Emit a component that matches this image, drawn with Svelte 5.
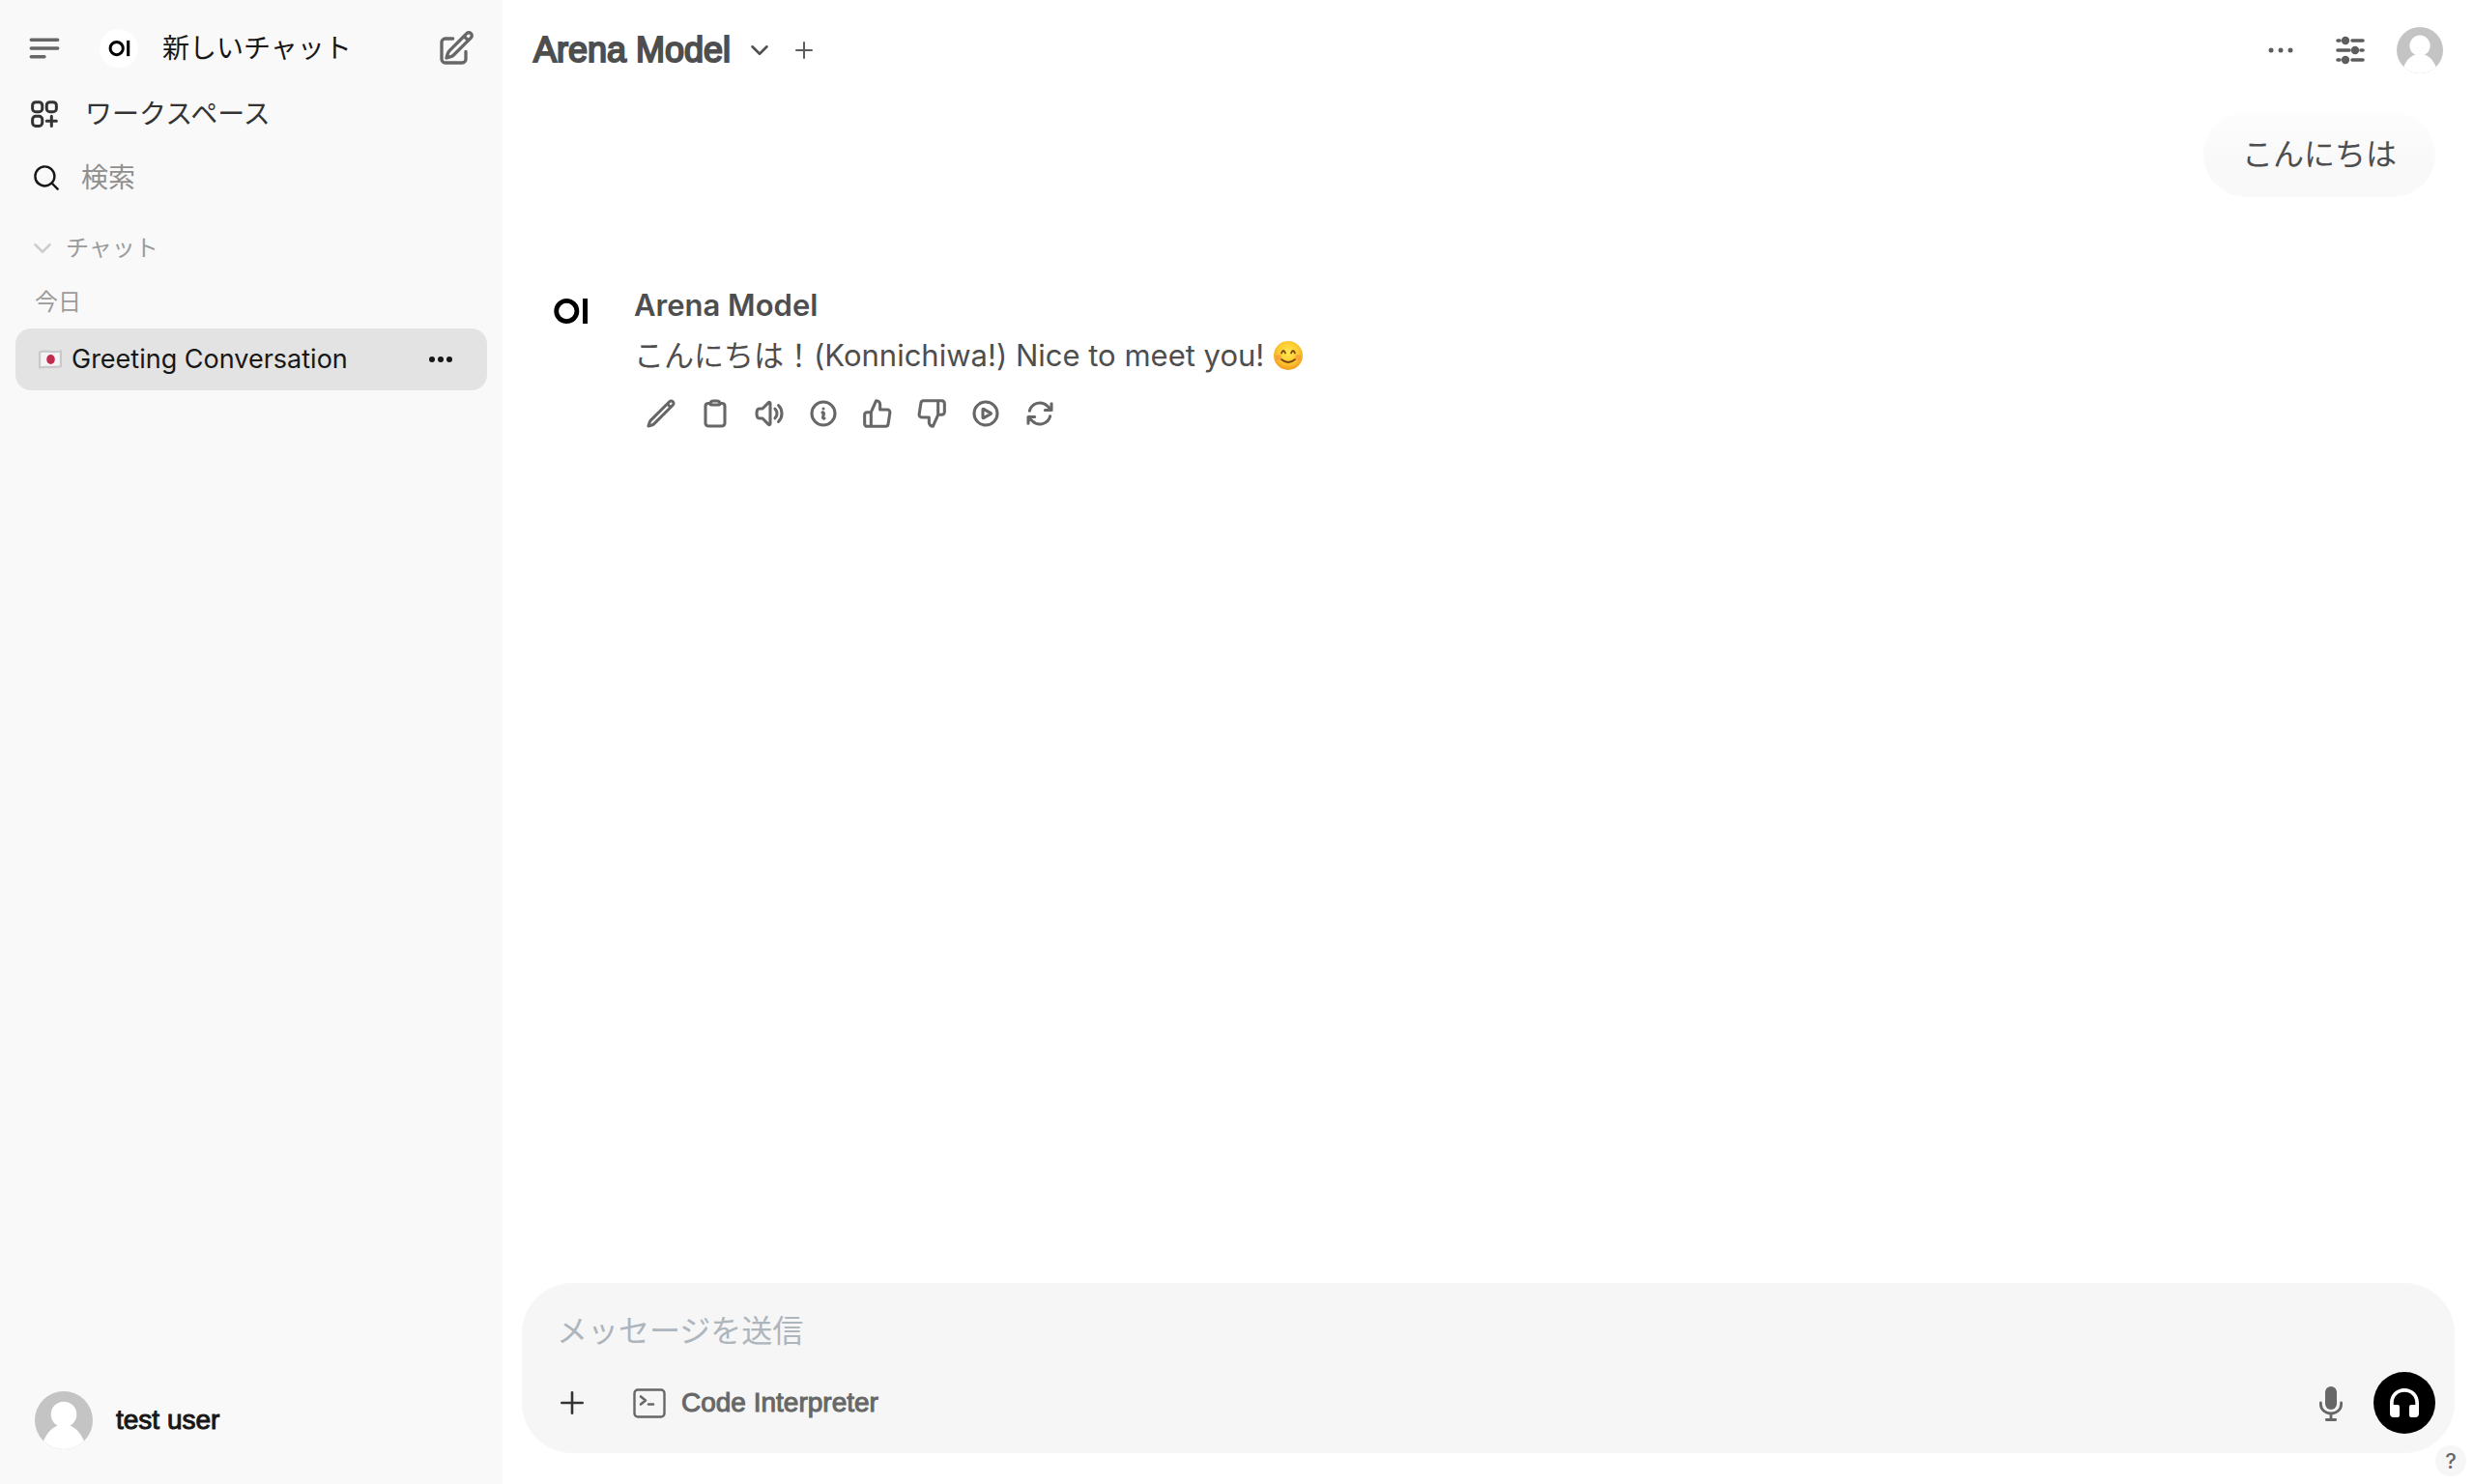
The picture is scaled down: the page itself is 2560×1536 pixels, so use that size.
<script>
  let search = $state("");
  let message = $state("");

  const ACTIONS = [
    {
      label: "編集",
      d: "M16.862 4.487l1.687-1.688a1.875 1.875 0 112.652 2.652L6.832 19.82a4.5 4.5 0 01-1.897 1.13l-2.685.8.8-2.685a4.5 4.5 0 011.13-1.897L16.863 4.487zm0 0L19.5 7.125"
    },
    {
      label: "コピー",
      d: "M15.666 3.888A2.25 2.25 0 0013.5 2.25h-3c-1.03 0-1.9.693-2.166 1.638m7.332 0c.055.194.084.4.084.612v0a.75.75 0 01-.75.75H9a.75.75 0 01-.75-.75v0c0-.212.03-.418.084-.612m7.332 0c.646.049 1.288.11 1.927.184 1.1.128 1.907 1.077 1.907 2.185V19.5a2.25 2.25 0 01-2.25 2.25H6.75A2.25 2.25 0 014.5 19.5V6.257c0-1.108.806-2.057 1.907-2.185a48.208 48.208 0 011.927-.184"
    },
    {
      label: "読み上げ",
      d: "M19.114 5.636a9 9 0 010 12.728M16.463 8.288a5.25 5.25 0 010 7.424M6.75 8.25l4.72-4.72a.75.75 0 011.28.53v15.88a.75.75 0 01-1.28.53l-4.72-4.72H4.51c-.88 0-1.704-.507-1.938-1.354A9.01 9.01 0 012.25 12c0-.83.112-1.633.322-2.396C2.806 8.756 3.63 8.25 4.51 8.25H6.75z"
    },
    {
      label: "情報",
      d: "M11.25 11.25l.041-.02a.75.75 0 011.063.852l-.708 2.836a.75.75 0 001.063.853l.041-.021M21 12a9 9 0 11-18 0 9 9 0 0118 0zm-9-3.75h.008v.008H12V8.25z"
    },
    {
      label: "良い応答",
      d: "M14 9V5a3 3 0 0 0-3-3l-4 9v11h11.28a2 2 0 0 0 2-1.7l1.38-9a2 2 0 0 0-2-2.3zM7 22H4a2 2 0 0 1-2-2v-7a2 2 0 0 1 2-2h3"
    },
    {
      label: "悪い応答",
      d: "M10 15v4a3 3 0 0 0 3 3l4-9V2H5.72a2 2 0 0 0-2 1.7l-1.38 9a2 2 0 0 0 2 2.3zm7-13h2.67A2.31 2.31 0 0 1 22 4v7a2.31 2.31 0 0 1-2.33 2H17"
    },
    {
      label: "続ける",
      d: "M21 12a9 9 0 1 1-18 0 9 9 0 0 1 18 0ZM15.91 11.672a.375.375 0 0 1 0 .656l-5.603 3.113a.375.375 0 0 1-.557-.328V8.887c0-.286.307-.466.557-.327l5.603 3.112Z"
    },
    {
      label: "再生成",
      d: "M16.023 9.348h4.992v-.001M2.985 19.644v-4.992m0 0h4.992m-4.993 0l3.181 3.183a8.25 8.25 0 0013.803-3.7M4.031 9.865a8.25 8.25 0 0113.803-3.7l3.181 3.182m0-4.991v4.99"
    }
  ];
</script>

{#snippet logo()}
  <svg class="logo" viewBox="0 0 64 64" aria-hidden="true">
    <circle cx="32" cy="32" r="32" fill="#fff" />
    <circle cx="28.3" cy="32" r="10.6" fill="none" stroke="#000" stroke-width="4.8" />
    <rect x="45" y="19" width="5" height="26" fill="#000" />
  </svg>
{/snippet}

{#snippet avatar()}
  <svg class="avatar" viewBox="0 0 60 60" aria-hidden="true">
    <clipPath id="avatar-clip"><circle cx="30" cy="30" r="30" /></clipPath>
    <g clip-path="url(#avatar-clip)">
      <rect width="60" height="60" fill="#c4c4c4" />
      <circle cx="30" cy="24" r="13.3" fill="#fff" />
      <path d="M9 51.5C13 42 19 36.500 25 35.500h10C41 36.500 47 42 51 51.500H60V60H0V51.500z" fill="#fff" />
    </g>
  </svg>
{/snippet}

<div class="app">
  <nav class="sidebar">
    <div class="row top">
      <button class="icon-btn" aria-label="サイドバー">
        <svg class="i40" viewBox="0 0 24 24"><path d="M3.750 6.750h16.500M3.750 12h16.500m-16.500 5.250H12" stroke-width="2" /></svg>
      </button>
      <a class="new-chat" href="#new">
        {@render logo()}
        <span>新しいチャット</span>
        <svg class="i40 edit" viewBox="0 0 24 24"><path stroke-width="2" d="m16.862 4.487 1.687-1.688a1.875 1.875 0 1 1 2.652 2.652L10.582 16.07a4.5 4.5 0 0 1-1.897 1.13L6 18l.8-2.685a4.5 4.5 0 0 1 1.13-1.897l8.932-8.931Zm0 0L19.5 7.125M18 14v4.75A2.25 2.25 0 0 1 15.75 21H5.25A2.25 2.25 0 0 1 3 18.75V8.25A2.25 2.25 0 0 1 5.25 6H10" /></svg>
      </a>
    </div>

    <a class="row workspace" href="#workspace">
      <svg class="i36" viewBox="0 0 24 24"><path stroke-width="2" d="M13.5 16.875h3.375m0 0h3.375m-3.375 0V13.5m0 3.375v3.375M6 10.5h2.25a2.25 2.25 0 0 0 2.25-2.25V6a2.25 2.25 0 0 0-2.25-2.25H6A2.25 2.25 0 0 0 3.75 6v2.25A2.25 2.25 0 0 0 6 10.5Zm0 9.75h2.25A2.25 2.25 0 0 0 10.5 18v-2.25a2.25 2.25 0 0 0-2.25-2.25H6a2.25 2.25 0 0 0-2.25 2.25V18A2.25 2.25 0 0 0 6 20.25Zm9.75-9.75H18a2.25 2.25 0 0 0 2.25-2.25V6A2.25 2.25 0 0 0 18 3.75h-2.25A2.25 2.25 0 0 0 13.5 6v2.25a2.25 2.25 0 0 0 2.25 2.25Z" /></svg>
      <span>ワークスペース</span>
    </a>

    <label class="row search">
      <svg class="i32 solid" viewBox="0 0 20 20"><path d="M9 3.5a5.5 5.5 0 1 0 0 11 5.5 5.5 0 0 0 0-11ZM2 9a7 7 0 1 1 12.452 4.391l3.328 3.329a.75.75 0 1 1-1.06 1.06l-3.329-3.328A7 7 0 0 1 2 9Z" /></svg>
      <input type="text" placeholder="検索" aria-label="検索" bind:value={search} />
    </label>

    <button class="section">
      <svg class="i24" viewBox="0 0 24 24"><path d="m19.5 8.25-7.5 7.5-7.5-7.5" stroke-width="2.5" /></svg>
      <span>チャット</span>
    </button>
    <div class="day">今日</div>

    <div class="chat-item">
      <a href="#chat">
        <svg class="flag" viewBox="0 0 24 20" aria-hidden="true">
          <path d="M1 2.500C7 0 14 3.500 23 1.500V17C15 19.500 8 16.500 1 18.500z" fill="#f4f4f5" stroke="#c9c9cd" />
          <ellipse cx="12.500" cy="10" rx="4.300" ry="4.900" fill="#c22a4e" />
        </svg>
        <span>Greeting Conversation</span>
      </a>
      <button class="icon-btn" aria-label="メニュー">
        <svg class="i24 solid" viewBox="0 0 24 24"><circle cx="3" cy="12" r="3" /><circle cx="12" cy="12" r="3" /><circle cx="21" cy="12" r="3" /></svg>
      </button>
    </div>

    <button class="user">
      {@render avatar()}
      <span>test user</span>
    </button>
  </nav>

  <main>
    <header>
      <button class="model">
        <span>Arena Model</span>
        <svg class="i24" viewBox="0 0 24 24"><path d="m19.5 8.25-7.5 7.5-7.5-7.5" stroke-width="2.5" /></svg>
      </button>
      <button class="icon-btn" aria-label="モデルを追加">
        <svg class="i24" viewBox="0 0 24 24"><path d="M12 4v16M4 12h16" stroke-width="2" /></svg>
      </button>
      <div class="tools">
        <button class="icon-btn" aria-label="その他">
          <svg class="i40 solid" viewBox="0 0 40 40"><circle cx="10" cy="20" r="2.500" /><circle cx="20" cy="20" r="2.500" /><circle cx="30" cy="20" r="2.500" /></svg>
        </button>
        <button class="icon-btn" aria-label="コントロール">
          <svg class="i40" viewBox="0 0 40 40">
            <path d="M7 10h2M22 10h11M7 20h12M31 20h2M7 30h2M22 30h11" stroke-width="3.600" />
            <g class="knobs"><circle cx="15" cy="10" r="4.200" /><circle cx="25" cy="20" r="4.200" /><circle cx="15" cy="30" r="4.200" /></g>
          </svg>
        </button>
        <button class="icon-btn account" aria-label="アカウント">{@render avatar()}</button>
      </div>
    </header>

    <section class="chat">
      <div class="bubble">こんにちは</div>

      <article>
        {@render logo()}
        <div class="answer">
          <h2>Arena Model</h2>
          <p>
            <span>こんにちは！(Konnichiwa!) Nice to meet you!</span>
            <svg class="smile" viewBox="0 0 32 32" role="img" aria-label="笑顔">
              <defs>
                <radialGradient id="face" cx="0.500" cy="0.400" r="0.600">
                  <stop offset="0" stop-color="#ffe94e" />
                  <stop offset="0.600" stop-color="#fdca31" />
                  <stop offset="1" stop-color="#f29a1f" />
                </radialGradient>
              </defs>
              <circle cx="16" cy="16" r="15" fill="url(#face)" />
              <g fill="none" stroke="#7a4414" stroke-width="1.800" stroke-linecap="round">
                <path d="M9 13.500q2-5 4 0M19 13.500q2-5 4 0" />
                <path d="M9 20q7 6 14 0" />
              </g>
              <g fill="#f58a3c" opacity="0.500"><circle cx="6" cy="18" r="3" /><circle cx="26" cy="18" r="3" /></g>
            </svg>
          </p>
          <div class="actions">
            {#each ACTIONS as action}
              <button class="icon-btn" aria-label={action.label}>
                <svg class="i32" viewBox="0 0 24 24"><path d={action.d} /></svg>
              </button>
            {/each}
          </div>
        </div>
      </article>
    </section>

    <form class="composer" onsubmit={(e) => e.preventDefault()}>
      <textarea rows="1" placeholder="メッセージを送信" aria-label="メッセージを送信" bind:value={message}></textarea>
      <div class="bar">
        <button type="button" class="icon-btn more" aria-label="追加">
          <svg class="i24" viewBox="0 0 24 24"><path d="M12 1.300v21.400M1.300 12h21.400" stroke-width="2.600" /></svg>
        </button>
        <button type="button" class="interpreter">
          <svg class="terminal" viewBox="0 0 34 32">
            <rect x="1.500" y="2.500" width="31" height="28" rx="3.500" stroke-width="2.400" />
            <path d="m8 9.500 5 4-5 4M16 17.500h5" stroke-width="2.600" />
          </svg>
          <span>Code Interpreter</span>
        </button>
        <button type="button" class="icon-btn mic" aria-label="録音">
          <svg class="i40" viewBox="0 0 40 40">
            <rect class="fill" x="14" y="3" width="12" height="24" rx="6" />
            <path d="M9.400 20v1.500a10.600 9.500 0 0 0 21.200 0V20M20 31v6M15.300 37.500h9.400" stroke-width="2.800" />
          </svg>
        </button>
        <button type="button" class="call" aria-label="通話">
          <svg class="i32" viewBox="0 0 32 32">
            <path class="fill" d="M16 1C7.500 1 1 7.500 1 16v11a4 4 0 0 0 4 4h4a2 2 0 0 0 2-2V20a2 2 0 0 0-2-2H4.700v-2C4.700 9.500 9.500 4.700 16 4.700S27.300 9.500 27.300 16v2H23a2 2 0 0 0-2 2v9a2 2 0 0 0 2 2h4a4 4 0 0 0 4-4V16C31 7.500 24.500 1 16 1z" />
          </svg>
        </button>
      </div>
    </form>
  </main>

  <button class="help" aria-label="ヘルプ">?</button>
</div>

<style>
  :global(body) {
    background: #fff;
  }

  .app {
    position: relative;
    display: flex;
    height: 100vh;
    font-family: Inter, "Noto Sans CJK JP", sans-serif;
    font-size: 28px;
    line-height: 40px;
    color: #171717;
  }

  button,
  input,
  textarea {
    font: inherit;
    color: inherit;
    background: none;
    border: none;
    padding: 0;
    margin: 0;
    outline: none;
  }

  button {
    cursor: pointer;
  }

  a {
    color: inherit;
    text-decoration: none;
  }

  svg {
    display: block;
    flex: none;
    fill: none;
    stroke: currentColor;
    stroke-width: 2.3;
    stroke-linecap: round;
    stroke-linejoin: round;
  }

  .solid,
  .fill,
  .knobs {
    fill: currentColor;
    stroke: none;
  }

  .logo,
  .avatar,
  .flag,
  .smile {
    stroke: none;
  }

  .i24 { width: 24px; height: 24px; }
  .i32 { width: 32px; height: 32px; }
  .i36 { width: 36px; height: 36px; }
  .i40 { width: 40px; height: 40px; }

  .icon-btn {
    display: flex;
    color: #676767;
  }

  /* sidebar */
  .sidebar {
    box-sizing: border-box;
    width: 520px;
    flex: none;
    display: flex;
    flex-direction: column;
    padding: 16px;
    background: #f9f9f9;
  }

  .row {
    display: flex;
    align-items: center;
    height: 68px;
    padding: 0 12px;
  }

  .top {
    padding: 0 12px 0 10px;
    gap: 37px;
  }

  .new-chat {
    flex: 1;
    display: flex;
    align-items: center;
    gap: 25px;
  }

  .new-chat .logo {
    width: 40px;
    height: 40px;
  }

  .edit {
    margin-left: auto;
    color: #676767;
  }

  .workspace {
    gap: 24px;
    color: #333;
  }

  .search {
    height: 64px;
    padding: 0 16px;
    gap: 20px;
  }

  .search input {
    flex: 1;
    min-width: 0;
  }

  .search input::placeholder {
    color: #8f8f8f;
    opacity: 1;
  }

  .section {
    display: flex;
    align-items: center;
    gap: 12px;
    height: 82px;
    padding: 0 16px;
    font-size: 24px;
    color: #9b9b9b;
  }

  .section svg {
    color: #cdcdcd;
  }

  .day {
    padding: 0 20px;
    margin-bottom: 12px;
    font-size: 24px;
    line-height: 30px;
    color: #9b9b9b;
  }

  .chat-item {
    display: flex;
    align-items: center;
    justify-content: space-between;
    height: 64px;
    padding: 0 36px 0 24px;
    border-radius: 16px;
    background: #e3e3e3;
    font-size: 27px;
  }

  .chat-item a {
    display: flex;
    align-items: center;
    gap: 10px;
  }

  .chat-item .icon-btn {
    color: #171717;
  }

  .flag {
    width: 24px;
    height: 20px;
  }

  .user {
    display: flex;
    align-items: center;
    gap: 24px;
    margin-top: auto;
    padding: 20px;
    font-family: "Liberation Sans", sans-serif;
    -webkit-text-stroke: 1px currentColor;
  }

  .user .avatar {
    width: 60px;
    height: 60px;
  }

  /* main column */
  main {
    flex: 1;
    min-width: 0;
    display: flex;
    flex-direction: column;
    color: #4e4e4e;
  }

  header {
    display: flex;
    align-items: center;
    height: 104px;
    padding: 0 32px;
    gap: 22px;
  }

  header .icon-btn {
    color: #5d5d5d;
  }

  .model {
    display: flex;
    align-items: center;
    gap: 18px;
    font-family: "Liberation Sans", sans-serif;
    font-size: 36px;
    -webkit-text-stroke: 2px currentColor;
  }

  .tools {
    display: flex;
    align-items: center;
    gap: 32px;
    margin-left: auto;
  }

  .account .avatar {
    width: 48px;
    height: 48px;
  }

  .account {
    margin-left: -4px;
  }

  .chat {
    flex: 1;
    display: flex;
    flex-direction: column;
    padding: 12px 40px 0 38px;
    font-size: 32px;
  }

  .bubble {
    align-self: flex-end;
    padding: 20px 40px;
    line-height: 48px;
    border-radius: 44px;
    background: linear-gradient(#fdfdfd, #f9f9f9 60%);
  }

  article {
    display: flex;
    gap: 34px;
    margin-top: 86px;
    font-size: 31px;
  }

  article .logo {
    width: 64px;
    height: 64px;
  }

  .answer {
    padding-top: 2px;
  }

  h2 {
    margin: 0;
    font-size: 31px;
    line-height: 48px;
    font-weight: 600;
  }

  p {
    display: flex;
    align-items: center;
    gap: 9px;
    margin: 0;
    line-height: 56px;
  }

  .smile {
    width: 32px;
    height: 32px;
  }

  .actions {
    display: flex;
    margin-top: 4px;
  }

  .actions .icon-btn {
    padding: 12px;
  }

  .composer {
    margin: 0 20px 32px;
    padding: 26px 20px 20px;
    border-radius: 52px;
    background: #f6f6f6;
  }

  textarea {
    display: block;
    box-sizing: border-box;
    width: 100%;
    height: 48px;
    padding: 0 16px;
    resize: none;
    overflow: hidden;
    font-size: 32px;
    line-height: 48px;
  }

  textarea::placeholder {
    color: #adb5bd;
    opacity: 1;
  }

  .bar {
    display: flex;
    align-items: center;
    height: 64px;
    margin-top: 18px;
  }

  .more {
    padding: 20px;
    color: #333;
  }

  .interpreter {
    display: flex;
    align-items: center;
    gap: 16px;
    padding: 0 31px;
    font-family: "Liberation Sans", sans-serif;
    color: #676767;
    -webkit-text-stroke: 1px currentColor;
  }

  .terminal {
    width: 34px;
    height: 32px;
  }

  .mic {
    margin-left: auto;
    margin-right: 24px;
  }

  .call {
    display: flex;
    padding: 16px;
    border-radius: 50%;
    background: #000;
    color: #fff;
  }

  .help {
    position: absolute;
    right: 8px;
    bottom: 8px;
    width: 32px;
    height: 32px;
    border-radius: 50%;
    background: #f6f6f6;
    color: #676767;
    font-size: 22px;
    line-height: 32px;
    font-weight: 500;
  }
</style>
